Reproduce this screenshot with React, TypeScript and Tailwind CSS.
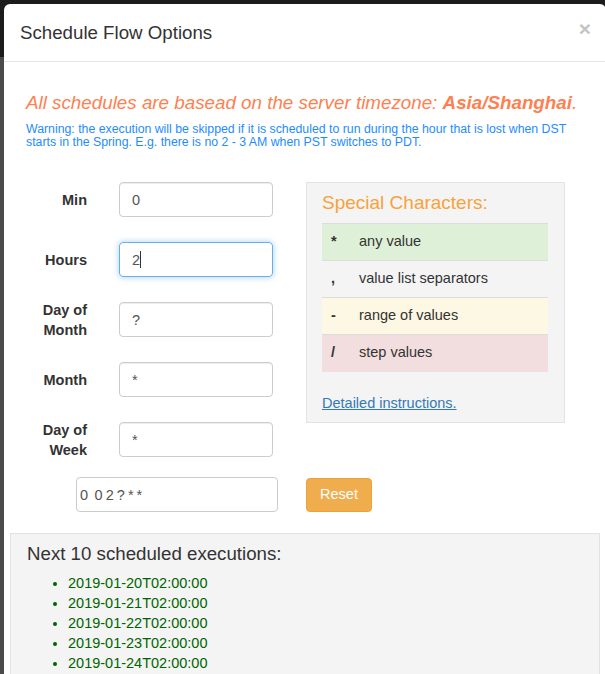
import { useState } from 'react'

const FIELDS = [
  { label: ['Min'], value: '0' },
  { label: ['Hours'], value: '2', focused: true },
  { label: ['Day of', 'Month'], value: '?' },
  { label: ['Month'], value: '*' },
  { label: ['Day of', 'Week'], value: '*' },
]

const SPECIAL = [
  { ch: '*', desc: 'any value', bg: 'bg-[#dff0d8]' },
  { ch: ',', desc: 'value list separators', bg: 'bg-[#f4f4f4]' },
  { ch: '-', desc: 'range of values', bg: 'bg-[#fcf8e3]' },
  { ch: '/', desc: 'step values', bg: 'bg-[#f2dede]' },
]

const NEXT_RUNS = [
  '2019-01-20T02:00:00',
  '2019-01-21T02:00:00',
  '2019-01-22T02:00:00',
  '2019-01-23T02:00:00',
  '2019-01-24T02:00:00',
  '2019-01-25T02:00:00',
  '2019-01-26T02:00:00',
]

export default function App() {
  const [values, setValues] = useState(FIELDS.map(f => f.value))

  return (
    <div className="relative w-[605px] h-[674px] overflow-hidden bg-[#4b4b4b] text-[#333]"
      style={{ fontFamily: "'Liberation Sans', Arial, sans-serif" }}>
      {/* page behind the backdrop */}
      <div className="h-[57px] bg-[#1c1c1c]" />

      {/* Modal */}
      <div className="absolute left-[4px] top-[4px] w-[602px] h-[700px] bg-white rounded-t-[6px]">
        {/* Header */}
        <div className="h-[58px] border-b border-[#e5e5e5] flex items-center justify-between pl-[16px] pr-[15px]">
          <h4 className="text-[18.7px] leading-[26px] pt-[1px]">Schedule Flow Options</h4>
          <button className="text-[21px] font-bold leading-none text-[#c4c4c4] -mt-[8px]">×</button>
        </div>

        {/* Body */}
        <div className="pl-[22px] pr-[15px]">
          <p className="mt-[28px] text-[18.8px] leading-[26px] italic text-[#ff7f50]">
            All schedules are basead on the server timezone: <b>Asia/Shanghai</b>.
          </p>
          <p className="mt-[7px] w-[552px] text-[12.3px] leading-[13px] text-[#1e8cff]">
            Warning: the execution will be skipped if it is scheduled to run during the hour that is lost when DST
            starts in the Spring. E.g. there is no 2 - 3 AM when PST switches to PDT.
          </p>

          <div className="flex mt-[33px]">
            {/* Form */}
            <div className="flex flex-col gap-[25px]">
              {FIELDS.map((f, i) => (
                <div key={i} className="flex items-center h-[35px]">
                  <label className="w-[61px] text-right text-[14.5px] leading-[20px] font-bold">
                    {f.label.map(l => <div key={l}>{l}</div>)}
                  </label>
                  <div className="relative ml-[32px]">
                    <input
                      value={values[i]}
                      onChange={e => setValues(v => v.map((x, j) => (j === i ? e.target.value : x)))}
                      className={`w-[154px] h-[35px] rounded-[4px] border px-[12px] text-[14.5px] text-[#555] outline-none ${
                        f.focused
                          ? 'border-[#66afe9] shadow-[0_0_6px_rgba(102,175,233,0.6)]'
                          : 'border-[#ccc] shadow-[inset_0_1px_1px_rgba(0,0,0,0.075)]'
                      }`}
                    />
                    {f.focused && (
                      <span className="absolute left-[21px] top-[9px] w-px h-[17px] bg-[#333]" />
                    )}
                  </div>
                </div>
              ))}
            </div>

            {/* Special characters */}
            <div className="ml-[33px] w-[259px] h-[241px] bg-[#f4f4f4] border border-[#e3e3e3] px-[15px]">
              <h4 className="mt-[7px] text-[19px] leading-[26px] text-[#f9a23a]">Special Characters:</h4>
              <table className="mt-[7px] w-[226px] text-[14.5px]">
                <tbody>
                  {SPECIAL.map(s => (
                    <tr key={s.desc} className={`${s.bg} border-t border-[#ddd] h-[37px]`}>
                      <td className="w-[37px] pl-[9px] font-bold">{s.ch}</td>
                      <td>{s.desc}</td>
                    </tr>
                  ))}
                </tbody>
              </table>
              <a href="#" className="block mt-[21px] text-[14.5px] text-[#337ab7] underline">Detailed instructions.</a>
            </div>
          </div>

          {/* Cron expression */}
          <div className="flex items-center mt-[20px] ml-[50px]">
            <input
              readOnly
              value={'0  0 2 ? * *'}
              className="w-[202px] h-[35px] rounded-[4px] border border-[#ccc] px-[3px] text-[14.5px] tracking-[-0.5px] text-[#555] outline-none"
            />
            <button className="ml-[28px] w-[66px] h-[34px] rounded-[4px] bg-[#f0ad4e] border border-[#eea236] text-white text-[14.5px]">
              Reset
            </button>
          </div>
        </div>

        {/* Next executions */}
        <div className="mt-[21px] mx-[6px] bg-[#f4f4f4] border border-[#e3e3e3] pl-[16px] pt-[7px] pb-[10px]">
          <h4 className="text-[18.7px] leading-[26px]">Next 10 scheduled executions:</h4>
          <ul className="mt-[6px] list-disc pl-[41px] text-[14.5px] leading-[20px] text-[#006400]">
            {NEXT_RUNS.map(r => (
              <li key={r}>{r}</li>
            ))}
          </ul>
        </div>
      </div>
    </div>
  )
}
